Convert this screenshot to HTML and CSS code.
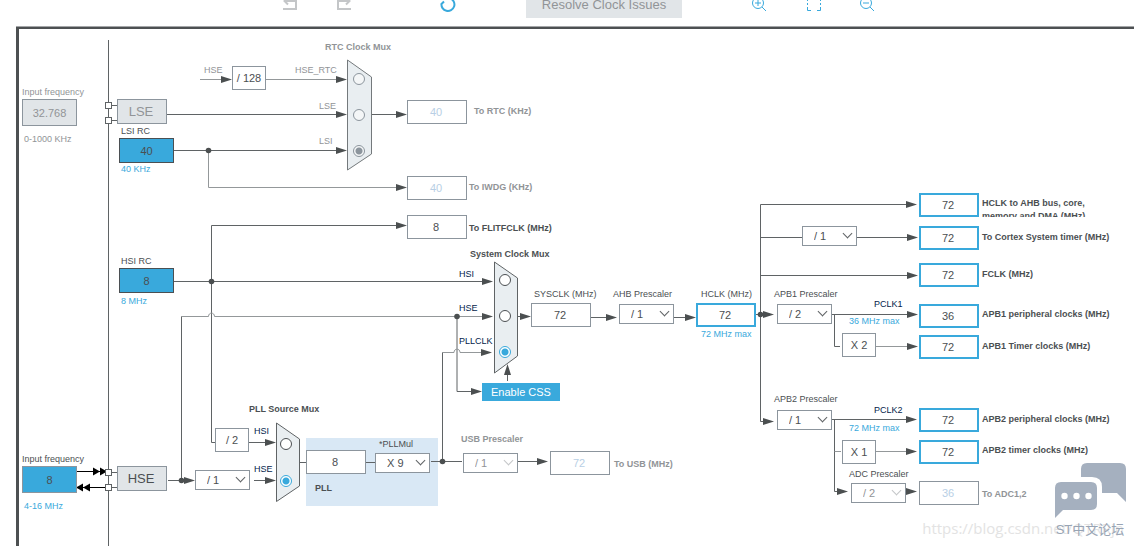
FILE: index.html
```html
<!DOCTYPE html>
<html lang="en">
<head>
    <meta charset="UTF-8">
    <meta name="viewport" content="width=device-width, initial-scale=1.0">
    <title>Clock Configuration</title>
    <link rel="stylesheet" href="styles.css">
</head>
<body>
    <div class="toolbar">
        <div class="tool-group">
            <button class="tool" aria-label="Undo" disabled>
                <svg viewBox="0 0 20 20"><path d="M3 15H16V7H5M8 3.500L4.500 7L8 10.500"/></svg>
            </button>
            <button class="tool" aria-label="Redo" disabled>
                <svg viewBox="0 0 20 20"><path d="M17 15H4V7H15M12 3.500L15.500 7L12 10.500"/></svg>
            </button>
        </div>
        <button class="tool refresh" aria-label="Refresh">
            <svg viewBox="0 0 20 20"><path d="M3.500 9.500A6.500 6.500 0 1 0 12.500 4.500M3.500 10L6 7.500"/></svg>
        </button>
        <button class="resolve" disabled>Resolve Clock Issues</button>
        <div class="tool-group">
            <button class="tool fine" aria-label="Zoom in">
                <svg viewBox="0 0 20 20"><circle cx="8" cy="9" r="5.500"/><path d="M12 13L16 17M8 6V12M5 9H11"/></svg>
            </button>
            <button class="tool fine" aria-label="Fit to screen">
                <svg viewBox="0 0 20 20"><path d="M3.500 7V3.500H7M13 3.500H16.500V7M16.500 13V16.500H13M7 16.500H3.500V13M3.500 9V11M16.500 9V11"/></svg>
            </button>
            <button class="tool fine" aria-label="Zoom out">
                <svg viewBox="0 0 20 20"><circle cx="8" cy="9" r="5.500"/><path d="M12 13L16 17M5 9H11"/></svg>
            </button>
        </div>
    </div>

    <main class="clock-tree">
        <div class="board">
            <div class="pll-panel"></div>

            <svg class="wires" width="1114" height="516" viewBox="20 30 1114 516" aria-hidden="true">
                <defs>
                    <marker id="arrow" viewBox="0 0 11 8" refX="1" refY="4" markerWidth="11" markerHeight="8" markerUnits="userSpaceOnUse" orient="auto">
                        <path class="head" d="M0 0.500L11 4L0 7.500Z"/>
                    </marker>
                </defs>

                <!-- chip edge and pins -->
                <path class="wire" d="M108.500 40V546M111 105.500H117M111 120.500H117M111 472.500H117M111 487.500H117"/>
                <path class="ext" d="M77 471.500H106M77 487.500H106"/>
                <path class="ext-head" d="M93 467.500L100 471.500L93 475.500ZM100 467.500L107 471.500L100 475.500ZM83 483.500L76 487.500L83 491.500ZM90 483.500L83 487.500L90 491.500Z"/>
                <rect class="pin" x="105.500" y="102.500" width="6" height="6"/>
                <rect class="pin" x="105.500" y="117.500" width="6" height="6"/>
                <rect class="pin" x="105.500" y="469.500" width="6" height="6"/>
                <rect class="pin" x="105.500" y="484.500" width="6" height="6"/>

                <!-- RTC -->
                <path class="wire light arrow" d="M200 79.500H222"/>
                <path class="wire light arrow" d="M266 79.500H337"/>
                <path class="wire arrow" d="M167 114.500H337"/>
                <path class="wire arrow" d="M174 150.500H337"/>
                <path class="wire light arrow" d="M208.500 150.500V187.500H397"/>
                <path class="wire arrow" d="M371 114.500H397"/>

                <!-- HSI, HSE and PLL into the system mux -->
                <path class="wire arrow" d="M211.500 281.500V225.500H397"/>
                <path class="wire arrow" d="M174 281.500H483"/>
                <path class="wire" d="M211.500 281.500V442.500H215"/>
                <path class="wire light arrow" d="M181.500 316.500H208.500C208.500 312 214.500 312 214.500 316.500H483"/>
                <path class="wire" d="M181.500 480.500V316.500"/>
                <path class="wire arrow" d="M457 316.500V391.500H472"/>
                <path class="wire light arrow" d="M442.500 352.500H454C454 348 460 348 460 352.500H482"/>
                <path class="wire" d="M442.500 461.500V352.500"/>
                <path class="wire arrow" d="M507.500 381V374"/>
                <path class="wire arrow" d="M249 442.500H266"/>
                <path class="wire arrow" d="M168 480.500H185"/>
                <path class="wire arrow" d="M254 480.500H266"/>
                <path class="wire" d="M299 462.500H306M366 462.500H375M431 461.500H462"/>
                <path class="wire arrow" d="M518 461.500H538"/>

                <!-- SYSCLK to HCLK -->
                <path class="wire arrow" d="M517 316.500H521"/>
                <path class="wire arrow" d="M591 317.500H607"/>
                <path class="wire arrow" d="M674 317.500H686"/>
                <path class="wire arrow" d="M756 314.500H764"/>

                <!-- bus outputs -->
                <path class="wire arrow" d="M760.500 314.500V204.500H907"/>
                <path class="wire" d="M760.500 237.500H802"/>
                <path class="wire arrow" d="M857 237.500H908"/>
                <path class="wire arrow" d="M760.500 275.500H908"/>
                <path class="wire arrow" d="M760.500 314.500V421.500H764"/>
                <path class="wire arrow" d="M832 314.500H908"/>
                <path class="wire" d="M834.500 314.500V346.500H840"/>
                <path class="wire light arrow" d="M876 346.500H908"/>
                <path class="wire arrow" d="M832 419.500H907"/>
                <path class="wire arrow" d="M834.500 419.500V491.500H838"/>
                <path class="wire light" d="M834.500 451.500H841"/>
                <path class="wire light arrow" d="M876 451.500H907"/>
                <path class="wire arrow" d="M906 491.500H907"/>

                <!-- junctions -->
                <circle class="dot" cx="208.500" cy="150.500" r="2.800"/>
                <circle class="dot" cx="211.500" cy="281.500" r="2.800"/>
                <circle class="dot" cx="181.500" cy="480.500" r="2.800"/>
                <circle class="dot" cx="457" cy="316.500" r="2.800"/>
                <circle class="dot" cx="442.500" cy="461.500" r="2.800"/>
                <circle class="dot" cx="760.500" cy="314.500" r="2.800"/>

                <!-- muxes -->
                <path class="mux off" d="M347.500 60L371.500 77V154L347.500 170Z"/>
                <path class="mux" d="M494.500 262L517.500 278V356L494.500 373Z"/>
                <path class="mux" d="M276.500 423L299.500 439V486L276.500 501.500Z"/>
            </svg>

            <!-- external and internal sources -->
            <label class="label off lse-freq-label" for="lseFreq">Input frequency</label>
            <input class="source off lse-freq" id="lseFreq" type="text" value="32.768" disabled>
            <span class="label off lse-range">0-1000 KHz</span>
            <button class="osc off lse" disabled>LSE</button>

            <label class="label lsi-label" for="lsi">LSI RC</label>
            <input class="source rc lsi" id="lsi" type="text" value="40" readonly>
            <span class="label hint lsi-range">40 KHz</span>

            <label class="label hsi-label" for="hsi">HSI RC</label>
            <input class="source rc hsi" id="hsi" type="text" value="8" readonly>
            <span class="label hint hsi-range">8 MHz</span>

            <label class="label hse-freq-label" for="hseFreq">Input frequency</label>
            <input class="source hse-freq" id="hseFreq" type="text" value="8">
            <span class="label hint hse-range">4-16 MHz</span>
            <button class="osc hse">HSE</button>

            <!-- RTC clock mux -->
            <span class="label off hse-128-label">HSE</span>
            <div class="factor div-128">/ 128</div>
            <span class="label title off rtc-title">RTC Clock Mux</span>
            <label class="label off rtc-hse-label" for="rtcHse">HSE_RTC</label>
            <label class="label off rtc-lse-label" for="rtcLse">LSE</label>
            <label class="label off rtc-lsi-label" for="rtcLsi">LSI</label>
            <div class="mux-inputs rtc-mux">
                <input type="radio" name="rtc" id="rtcHse" disabled>
                <input type="radio" name="rtc" id="rtcLse" disabled>
                <input type="radio" name="rtc" id="rtcLsi" disabled checked>
            </div>
            <input class="value off rtc-out" id="rtcOut" type="text" value="40" disabled>
            <label class="label title off rtc-out-label" for="rtcOut">To RTC (KHz)</label>
            <input class="value off iwdg-out" id="iwdgOut" type="text" value="40" disabled>
            <label class="label title off iwdg-out-label" for="iwdgOut">To IWDG (KHz)</label>
            <input class="value flitf-out" id="flitfOut" type="text" value="8" readonly>
            <label class="label title flitf-out-label" for="flitfOut">To FLITFCLK (MHz)</label>

            <!-- PLL -->
            <span class="label title pll-title">PLL Source Mux</span>
            <div class="factor div-2">/ 2</div>
            <div class="pick hse-div"><select aria-label="HSE divider"><option>/ 1</option><option>/ 2</option></select></div>
            <label class="label signal pll-hsi-label" for="pllHsi">HSI</label>
            <label class="label signal pll-hse-label" for="pllHse">HSE</label>
            <div class="mux-inputs pll-mux">
                <input type="radio" name="pll" id="pllHsi">
                <input type="radio" name="pll" id="pllHse" checked>
            </div>
            <input class="value pll-in" id="pllIn" type="text" value="8" readonly>
            <label class="label title pll-in-label" for="pllIn">PLL</label>
            <label class="label pll-mul-label" for="pllMul">*PLLMul</label>
            <div class="pick pll-mul"><select id="pllMul"><option>X 9</option><option>X 8</option></select></div>
            <label class="label title off usb-pre-label" for="usbPre">USB Prescaler</label>
            <div class="pick off usb-pre"><select id="usbPre" disabled><option>/ 1</option></select></div>
            <input class="value off usb-out" id="usbOut" type="text" value="72" disabled>
            <label class="label title off usb-out-label" for="usbOut">To USB (MHz)</label>

            <!-- system clock mux -->
            <span class="label title sys-title">System Clock Mux</span>
            <label class="label signal sys-hsi-label" for="sysHsi">HSI</label>
            <label class="label signal sys-hse-label" for="sysHse">HSE</label>
            <label class="label signal sys-pll-label" for="sysPll">PLLCLK</label>
            <div class="mux-inputs sys-mux">
                <input type="radio" name="sys" id="sysHsi">
                <input type="radio" name="sys" id="sysHse">
                <input type="radio" name="sys" id="sysPll" checked>
            </div>
            <button class="css-button">Enable CSS</button>
            <label class="label sysclk-label" for="sysclk">SYSCLK (MHz)</label>
            <input class="value sysclk" id="sysclk" type="text" value="72" readonly>
            <label class="label ahb-label" for="ahb">AHB Prescaler</label>
            <div class="pick ahb"><select id="ahb"><option>/ 1</option><option>/ 2</option></select></div>
            <label class="label hclk-label" for="hclk">HCLK (MHz)</label>
            <input class="value bus hclk" id="hclk" type="text" value="72">
            <span class="label hint hclk-max">72 MHz max</span>

            <!-- AHB outputs -->
            <div class="pick cortex-pre"><select aria-label="Cortex System timer prescaler"><option>/ 1</option><option>/ 8</option></select></div>
            <input class="value bus out-ahb" id="outAhb" type="text" value="72">
            <label class="label title clipped out-ahb-label" for="outAhb">HCLK to AHB bus, core, memory and DMA (MHz)</label>
            <input class="value bus out-cortex" id="outCortex" type="text" value="72">
            <label class="label title out-cortex-label" for="outCortex">To Cortex System timer (MHz)</label>
            <input class="value bus out-fclk" id="outFclk" type="text" value="72">
            <label class="label title out-fclk-label" for="outFclk">FCLK (MHz)</label>

            <!-- APB1 -->
            <label class="label apb1-label" for="apb1">APB1 Prescaler</label>
            <div class="pick apb1"><select id="apb1"><option>/ 2</option><option>/ 1</option></select></div>
            <span class="label signal pclk1-label">PCLK1</span>
            <span class="label hint pclk1-max">36 MHz max</span>
            <div class="factor mul-apb1">X 2</div>
            <input class="value bus out-apb1" id="outApb1" type="text" value="36">
            <label class="label title out-apb1-label" for="outApb1">APB1 peripheral clocks (MHz)</label>
            <input class="value bus out-tim1" id="outTim1" type="text" value="72">
            <label class="label title out-tim1-label" for="outTim1">APB1 Timer clocks (MHz)</label>

            <!-- APB2 -->
            <label class="label apb2-label" for="apb2">APB2 Prescaler</label>
            <div class="pick apb2"><select id="apb2"><option>/ 1</option><option>/ 2</option></select></div>
            <span class="label signal pclk2-label">PCLK2</span>
            <span class="label hint pclk2-max">72 MHz max</span>
            <div class="factor mul-apb2">X 1</div>
            <label class="label adc-label" for="adc">ADC Prescaler</label>
            <div class="pick off adc"><select id="adc" disabled><option>/ 2</option></select></div>
            <input class="value bus out-apb2" id="outApb2" type="text" value="72">
            <label class="label title out-apb2-label" for="outApb2">APB2 peripheral clocks (MHz)</label>
            <input class="value bus out-tim2" id="outTim2" type="text" value="72">
            <label class="label title out-tim2-label" for="outTim2">APB2 timer clocks (MHz)</label>
            <input class="value off out-adc" id="outAdc" type="text" value="36" disabled>
            <label class="label title off out-adc-label" for="outAdc">To ADC1,2</label>

            <div class="watermark">https://blog.csdn.net/QTRRjn</div>
            <div class="forum">
                <svg width="72" height="56" viewBox="0 0 72 56" aria-hidden="true">
                    <path d="M27 14V6Q27 0 33 0H66Q72 0 72 6V39L63 30H48V24Q48 14 38 14Z"/>
                    <path d="M7 19H37Q43 19 43 25V41Q43 47 37 47H9L1 55V25Q1 19 7 19Z"/>
                    <circle cx="10.500" cy="33" r="3.200"/>
                    <circle cx="22.500" cy="33" r="3.200"/>
                    <circle cx="34.500" cy="33" r="3.200"/>
                </svg>
                <span>ST中文论坛</span>
            </div>
        </div>
    </main>
</body>
</html>
```
FILE: styles.css
```css
body {
    margin: 0;
    background-color: #fff;
    font-family: "Liberation Sans", Arial, sans-serif;
    font-size: 9px;
    color: #4b4f52;
    overflow: hidden;
}

button,
input,
select {
    box-sizing: border-box;
    margin: 0;
    padding: 0;
    font-family: inherit;
    font-size: 11px;
    color: inherit;
}

/* toolbar, scrolled partly out of view */
.toolbar {
    display: flex;
    justify-content: center;
    align-items: center;
    margin-top: -10px;
    padding: 0 0 9px 24px;
}

.tool-group {
    display: flex;
    gap: 34px;
}

.tool {
    width: 20px;
    height: 20px;
    border: none;
    background: none;
    color: #39a9dc;
}

.tool:disabled {
    color: #c4c6c8;
}

.tool svg {
    display: block;
    width: 20px;
    height: 20px;
    fill: none;
    stroke: currentColor;
    stroke-width: 2;
}

.tool.fine svg {
    stroke-width: 1;
}

.refresh {
    margin: 0 68px 0 84px;
}

.resolve {
    height: 28px;
    padding: 0 16px;
    margin-right: 68px;
    border: none;
    background-color: #e1e5e8;
    color: #919497;
    font-size: 13px;
}

/* board */
.clock-tree {
    margin-left: 16px;
    padding: 1px 0 0 1px;
    border-left: 3px solid #4d5052;
    border-top: 2px solid #4d5052;
    box-shadow: 0 -1px 0 #a4a6a8;
}

.board {
    position: relative;
    min-height: calc(100vh - 30px);
    overflow: hidden;
}

.wires {
    position: absolute;
    left: 0;
    top: 0;
}

.wire {
    fill: none;
    stroke: #5f6365;
}

.wire.light {
    stroke: #94989a;
}

.wire.arrow {
    marker-end: url(#arrow);
}

.head,
.dot {
    fill: #4b4f50;
}

.ext {
    stroke: #000;
}

.ext-head {
    fill: #000;
}

.pin {
    fill: #fff;
    stroke: #5f6365;
}

.mux {
    fill: #e9eef1;
    stroke: #5f6365;
}

.mux.off {
    stroke: #74797c;
}

.label,
.source,
.osc,
.factor,
.value,
.pick,
.mux-inputs,
.css-button,
.pll-panel {
    position: absolute;
}

.label {
    padding-top: 1px;
    line-height: 13px;
    white-space: nowrap;
}

.label.off {
    color: #919497;
}

.title {
    font-weight: bold;
}

.signal {
    color: #03234b;
}

.hint {
    color: #39a9dc;
}

.clipped {
    width: 120px;
    height: 20px;
    white-space: normal;
    overflow: hidden;
}

.source {
    width: 55px;
    height: 27px;
    border: 1px solid #8c959d;
    background-color: #39a9dc;
    text-align: center;
}

.source.rc {
    height: 25px;
    border-color: #4b4f52;
}

.source.off {
    background-color: #e1e5e8;
    color: #919497;
}

.osc {
    width: 50px;
    height: 25px;
    padding-right: 2px;
    border: 1px solid #8c959d;
    background-color: #e1e5e8;
    font-size: 13px;
}

.osc.off {
    color: #919497;
}

.factor {
    box-sizing: border-box;
    width: 34px;
    height: 24px;
    border: 1px solid #8c959d;
    background-color: #fff;
    font-size: 11px;
    line-height: 22px;
    text-align: center;
}

.value {
    width: 60px;
    height: 24px;
    padding-right: 2px;
    border: 1px solid #8c959d;
    background-color: #fff;
    text-align: center;
}

.value.off {
    color: #b8cfe5;
}

.value.bus {
    border: 2px solid #39a9dc;
}

.pick select {
    display: block;
    width: 55px;
    height: 20px;
    padding-left: 11px;
    border: 1px solid #8c959d;
    border-radius: 0;
    background-color: #fff;
    appearance: none;
}

.pick::after {
    content: "";
    position: absolute;
    right: 6px;
    top: 4px;
    width: 6px;
    height: 6px;
    border-right: 1px solid #5f6365;
    border-bottom: 1px solid #5f6365;
    transform: rotate(45deg);
    pointer-events: none;
}

.pick.off select {
    color: #919497;
    opacity: 1;
}

.pick.off::after {
    border-color: #c4c6c8;
}

.mux-inputs {
    display: flex;
    flex-direction: column;
    gap: 24px;
}

.mux-inputs input {
    width: 12px;
    height: 12px;
    border: 1px solid #4b4f52;
    border-radius: 50%;
    background-color: #fff;
    appearance: none;
}

.mux-inputs input:checked {
    border-color: #39a9dc;
    background: radial-gradient(circle, #39a9dc 3px, #fff 4px);
}

.mux-inputs input:disabled {
    border-color: #8c959d;
    background-color: #f4f6f7;
}

.mux-inputs input:disabled:checked {
    background: radial-gradient(circle, #8c959d 3px, #f4f6f7 4px);
}

.css-button {
    left: 462px;
    top: 353px;
    width: 78px;
    height: 18px;
    border: none;
    background-color: #39a9dc;
    color: #fff;
}

.pll-panel {
    left: 286px;
    top: 408px;
    width: 132px;
    height: 68px;
    background-color: #d9e8f5;
}

/* node places on the board: sources */
.lse-freq-label { left: 2px; top: 55px; }
.lse-freq { left: 2px; top: 69px; }
.lse-range { left: 4px; top: 102px; }
.lse { left: 97px; top: 69px; }
.lsi-label { left: 101px; top: 94px; }
.lsi { left: 99px; top: 108px; }
.lsi-range { left: 101px; top: 132px; }
.hsi-label { left: 101px; top: 224px; }
.hsi { left: 99px; top: 238px; }
.hsi-range { left: 101px; top: 264px; }
.hse-freq-label { left: 2px; top: 422px; }
.hse-freq { left: 2px; top: 436px; }
.hse-range { left: 4px; top: 469px; }
.hse { left: 97px; top: 436px; }

/* RTC */
.hse-128-label { left: 184px; top: 33px; }
.div-128 { left: 212px; top: 36px; }
.rtc-title { left: 305px; top: 10px; }
.rtc-hse-label { left: 275px; top: 33px; }
.rtc-lse-label { left: 299px; top: 69px; }
.rtc-lsi-label { left: 299px; top: 104px; }
.rtc-mux { left: 333px; top: 43px; }
.rtc-out { left: 387px; top: 70px; }
.rtc-out-label { left: 454px; top: 74px; }
.iwdg-out { left: 387px; top: 146px; }
.iwdg-out-label { left: 449px; top: 150px; }
.flitf-out { left: 387px; top: 185px; }
.flitf-out-label { left: 449px; top: 191px; }

/* PLL */
.pll-title { left: 229px; top: 372px; }
.div-2 { left: 195px; top: 398px; }
.hse-div { left: 175px; top: 440px; }
.pll-hsi-label { left: 234px; top: 394px; }
.pll-hse-label { left: 234px; top: 432px; }
.pll-mux { left: 260px; top: 408px; gap: 25px; }
.pll-in { left: 286px; top: 420px; }
.pll-in-label { left: 295px; top: 451px; }
.pll-mul-label { left: 359px; top: 407px; }
.pll-mul { left: 355px; top: 423px; }
.usb-pre-label { left: 441px; top: 402px; }
.usb-pre { left: 443px; top: 423px; }
.usb-out { left: 530px; top: 421px; }
.usb-out-label { left: 594px; top: 427px; }

/* system clock */
.sys-title { left: 450px; top: 217px; }
.sys-hsi-label { left: 439px; top: 237px; }
.sys-hse-label { left: 439px; top: 271px; }
.sys-pll-label { left: 439px; top: 304px; }
.sys-mux { left: 479px; top: 244px; }
.sysclk-label { left: 514px; top: 257px; }
.sysclk { left: 511px; top: 273px; }
.ahb-label { left: 593px; top: 257px; }
.ahb { left: 599px; top: 274px; }
.hclk-label { left: 681px; top: 257px; }
.hclk { left: 676px; top: 273px; }
.hclk-max { left: 681px; top: 297px; }

/* bus clocks */
.cortex-pre { left: 782px; top: 196px; }
.apb1-label { left: 754px; top: 257px; }
.apb1 { left: 757px; top: 274px; }
.pclk1-label { left: 854px; top: 267px; }
.pclk1-max { left: 829px; top: 284px; }
.mul-apb1 { left: 822px; top: 303px; }
.apb2-label { left: 754px; top: 362px; }
.apb2 { left: 757px; top: 380px; }
.pclk2-label { left: 854px; top: 373px; }
.pclk2-max { left: 829px; top: 391px; }
.mul-apb2 { left: 822px; top: 410px; }
.adc-label { left: 829px; top: 437px; }
.adc { left: 831px; top: 453px; }

/* outputs */
.out-ahb { left: 899px; top: 163px; }
.out-ahb-label { left: 962px; top: 166px; }
.out-cortex { left: 899px; top: 196px; }
.out-cortex-label { left: 962px; top: 200px; }
.out-fclk { left: 899px; top: 233px; }
.out-fclk-label { left: 962px; top: 237px; }
.out-apb1 { left: 899px; top: 274px; }
.out-apb1-label { left: 962px; top: 277px; }
.out-tim1 { left: 899px; top: 305px; }
.out-tim1-label { left: 962px; top: 309px; }
.out-apb2 { left: 899px; top: 378px; }
.out-apb2-label { left: 962px; top: 382px; }
.out-tim2 { left: 899px; top: 410px; }
.out-tim2-label { left: 962px; top: 413px; }
.out-adc { left: 899px; top: 451px; }
.out-adc-label { left: 962px; top: 457px; }

.watermark {
    position: absolute;
    right: 10px;
    bottom: 6px;
    color: #e3e3e3;
    font-family: "Open Sans", sans-serif;
    font-size: 15px;
    line-height: 24px;
}

.forum {
    position: absolute;
    right: 8px;
    bottom: 5px;
    display: flex;
    flex-direction: column;
    align-items: center;
    color: #98a4b4;
    font-family: "Liberation Sans", "Noto Sans CJK SC", sans-serif;
    font-size: 13px;
    line-height: 22px;
}

.forum svg {
    fill: #a5b0bf;
}

.forum circle {
    fill: #fff;
}
```
